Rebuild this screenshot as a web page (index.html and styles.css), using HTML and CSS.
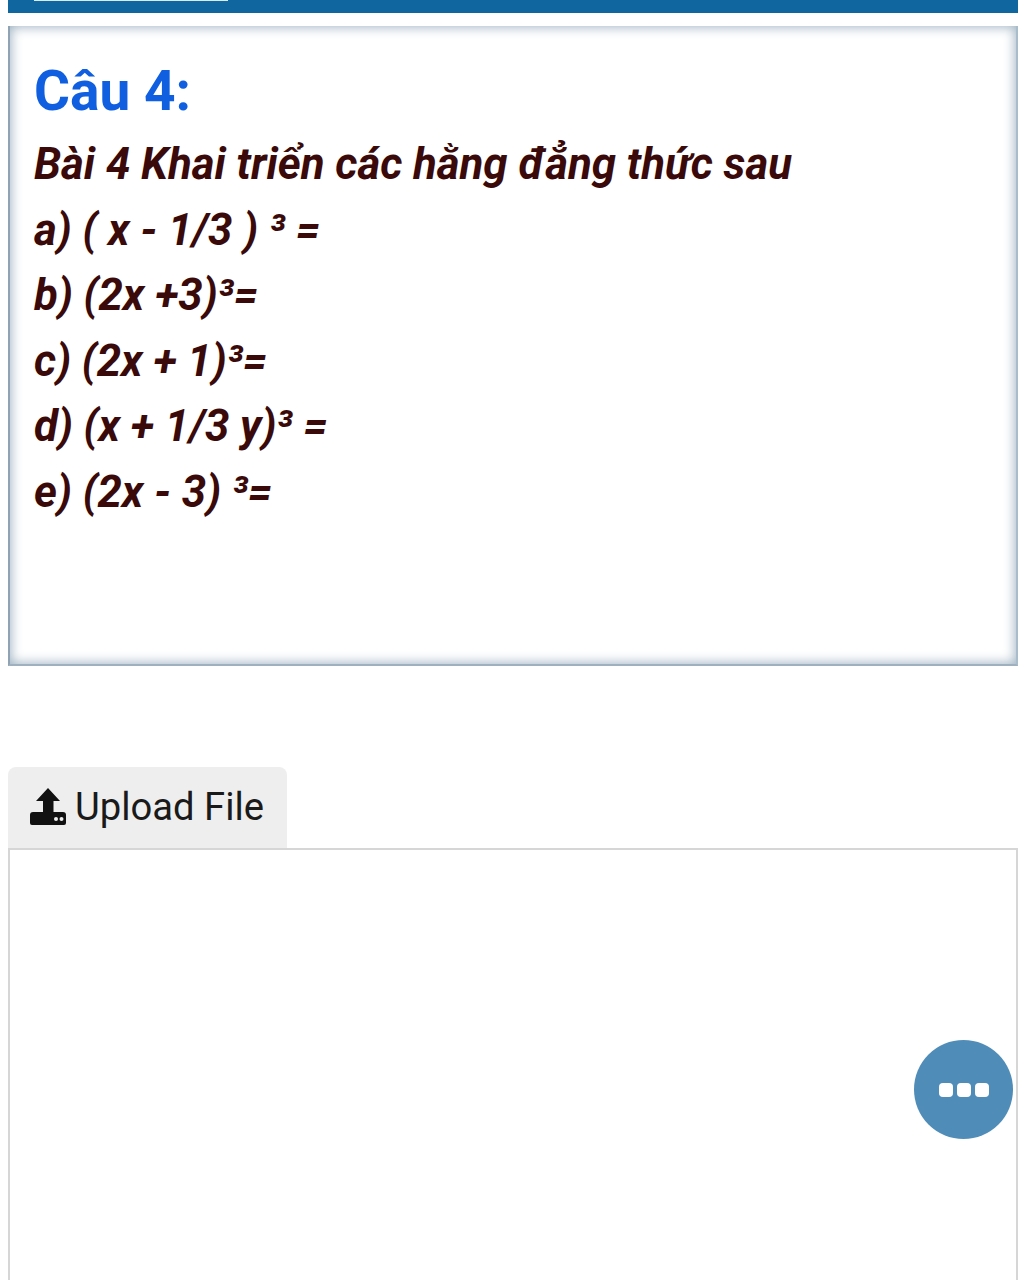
FILE: index.html
```html
<!doctype html>
<html lang="vi">

<head>
	<title>Câu 4</title>
	<meta charset="UTF-8">
	<link rel="stylesheet" href="styles.css">
</head>

<body>

<div class="top-bar"><span class="top-tab"></span></div>

<div class="question-box">
	<h2 class="question-title">Câu 4:</h2>
	<p class="question-line">Bài 4 Khai triển các hằng đẳng thức sau</p>
	<p class="question-line">a) ( x - 1/3 ) ³ =</p>
	<p class="question-line">b) (2x +3)³=</p>
	<p class="question-line">c) (2x + 1)³=</p>
	<p class="question-line">d) (x + 1/3 y)³ =</p>
	<p class="question-line">e) (2x - 3) ³=</p>
</div>

<div class="upload-tab">
	<svg class="upload-icon" viewBox="0 0 36 37">
		<path d="M18 0 L30 13 L23.5 13 L23.5 26 L13 26 L13 13 L6 13 Z" fill="#111111"/>
		<path d="M3 24 H33 Q36 24 36 27 V35 Q36 37 34 37 H2 Q0 37 0 35 V27 Q0 24 3 24 Z" fill="#111111"/>
		<circle cx="26" cy="31" r="2" fill="#eeeeee"/>
		<circle cx="31.5" cy="31" r="2" fill="#eeeeee"/>
	</svg>
	<span class="upload-label">Upload File</span>
</div>

<div class="answer-box"></div>

<div class="fab">
	<span class="fab-dot"></span>
	<span class="fab-dot"></span>
	<span class="fab-dot"></span>
</div>

</body>
</html>
```

FILE: styles.css
```css
html, body { margin: 0; padding: 0; height: 1280px; overflow: hidden; background-color: #ffffff; }
body { box-sizing: border-box; padding: 0 6px 0 8px; font-family: Roboto, "Noto Sans", sans-serif; }

.top-bar { height: 13px; background-color: #10669e; padding-left: 26px; }
.top-tab { display: block; width: 194px; height: 1px; background-color: #d8ecf5; }

.question-box { box-sizing: border-box; height: 640px; margin-top: 13px; padding: 35px 24px 0 24px; background-color: #ffffff; box-shadow: inset 0 0 12px 1px #9fb2c2; border-bottom: 2px solid #9fb1bf; border-left: 2px solid #8fa3b5; border-right: 2px solid #a9bccb; }
.question-title { margin: 0 0 11px 0; font-size: 55px; line-height: 60px; font-weight: 700; color: #0f5fe0; }
.question-line { margin: 0; font-size: 43.8px; line-height: 65.5px; font-weight: 700; font-style: italic; color: #3a0a0a; }

.upload-tab { box-sizing: border-box; display: flex; align-items: center; width: 279px; height: 81px; margin-top: 101px; padding-left: 22px; background-color: #eeeeee; border-radius: 8px 8px 0 0; }
.upload-icon { width: 36px; height: 37px; margin-right: 9px; margin-bottom: 3px; }
.upload-label { font-size: 38.2px; color: #1a1a1a; position: relative; top: -1px; }

.answer-box { box-sizing: border-box; height: 432px; border: 2px solid #d6d6d6; border-bottom: 0; }

.fab { position: absolute; left: 914px; top: 1040px; width: 99px; height: 99px; border-radius: 50%; background-color: #4f8db8; display: flex; align-items: center; justify-content: center; gap: 4px; }
.fab-dot { width: 14px; height: 14px; border-radius: 4px; background-color: #ffffff; }
```
